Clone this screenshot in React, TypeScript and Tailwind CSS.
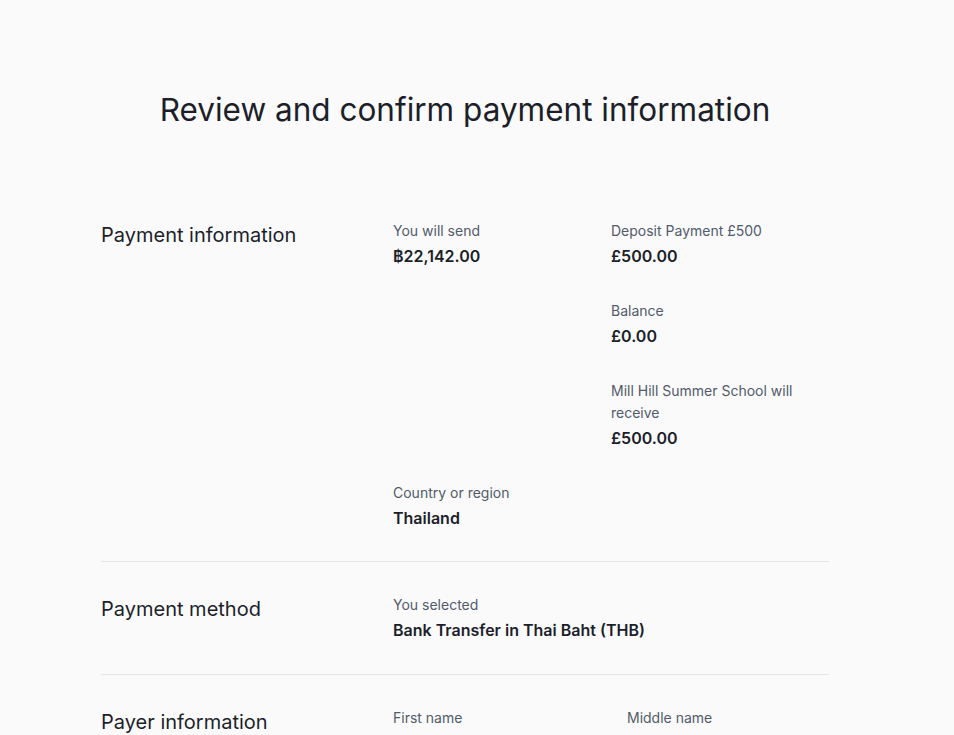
import React from "react";

const Label = ({ children }: { children: React.ReactNode }) => (
  <div className="text-[14px] leading-[22px] text-[#525b6b]">{children}</div>
);
const Value = ({ children }: { children: React.ReactNode }) => (
  <div className="text-[16px] leading-[24px] font-semibold text-[#1c1f2a] mt-[2px]">{children}</div>
);

export default function App() {
  return (
    <div className="min-h-screen bg-[#fafafa] font-['Inter',sans-serif] text-[#1c1f2a]">
      <div className="ml-[101px] w-[728px] pt-[91px]">
        <h1 className="text-center text-[31.5px] leading-[38px] font-normal text-[#1c1f2a]">
          Review and confirm payment information
        </h1>
        <div className="mt-[91px]">
          <section className="grid grid-cols-[292px_1fr] pb-[31px] border-b border-[#e3e5e8]">
            <h2 className="text-[20px] leading-[30px]">Payment information</h2>
            <div className="grid grid-cols-2 gap-y-8">
              <div>
                <Label>You will send</Label>
                <Value>฿22,142.00</Value>
              </div>
              <div className="flex flex-col gap-8">
                <div>
                  <Label>Deposit Payment £500</Label>
                  <Value>£500.00</Value>
                </div>
                <div>
                  <Label>Balance</Label>
                  <Value>£0.00</Value>
                </div>
                <div>
                  <Label>Mill Hill Summer School will receive</Label>
                  <Value>£500.00</Value>
                </div>
              </div>
              <div>
                <Label>Country or region</Label>
                <Value>Thailand</Value>
              </div>
            </div>
          </section>
          <section className="grid grid-cols-[292px_1fr] py-8 border-b border-[#e3e5e8]">
            <h2 className="text-[20px] leading-[30px]">Payment method</h2>
            <div>
              <Label>You selected</Label>
              <Value>Bank Transfer in Thai Baht (THB)</Value>
            </div>
          </section>
          <section className="grid grid-cols-[292px_1fr] py-8">
            <h2 className="text-[20px] leading-[30px]">Payer information</h2>
            <div className="grid grid-cols-2 gap-x-8">
              <div>
                <Label>First name</Label>
              </div>
              <div>
                <Label>Middle name</Label>
              </div>
            </div>
          </section>
        </div>
      </div>
    </div>
  );
}
